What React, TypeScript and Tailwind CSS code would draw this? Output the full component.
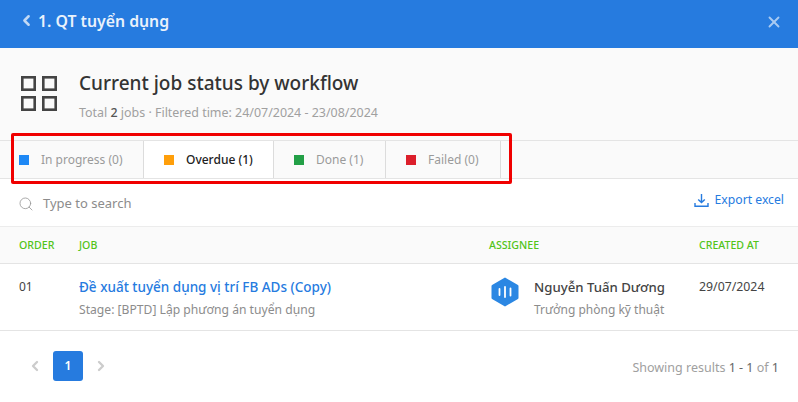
import { ChevronLeft, ChevronRight, Search, X } from "lucide-react";

const tabs = [
  { label: "In progress (0)", color: "bg-[#1e88f5]", width: "w-[144px]", pad: "pl-[19px]" },
  { label: "Overdue (1)", color: "bg-[#ff9f0a]", width: "w-[130px]", pad: "pl-[20px]", active: true },
  { label: "Done (1)", color: "bg-[#23a047]", width: "w-[112px]", pad: "pl-[20px]" },
  { label: "Failed (0)", color: "bg-[#dc1f2b]", width: "w-[115px]", pad: "pl-[20px]" },
];

export default function App() {
  return (
    <div className="relative h-[402px] w-[798px] overflow-hidden bg-white font-['Noto_Sans','Open_Sans',sans-serif] text-[#333]">
      <header className="flex h-[48px] items-center justify-between bg-[#267bdf] pb-[4px] pl-[18px] pr-[15px] text-white">
        <div className="flex items-center gap-[3px] opacity-90">
          <ChevronLeft className="mb-[3px] h-[17px] w-[17px] opacity-80" strokeWidth={3.5} />
          <span className="text-[15.8px] font-semibold">1. QT tuyển dụng</span>
        </div>
        <X className="h-[18px] w-[18px] opacity-60" strokeWidth={2.5} />
      </header>

      <section className="flex h-[93px] items-center gap-[22px] border-b border-[#e4e4e4] bg-[#fafafa] pb-[1px] pl-[21px]">
        <svg className="h-[35px] w-[36px]" viewBox="0 0 36 35" fill="none" stroke="#444" strokeWidth="2.6">
          <rect x="1.3" y="1.3" width="12.4" height="12.4" />
          <rect x="22.3" y="1.3" width="12.4" height="12.4" />
          <rect x="1.3" y="21.300" width="12.4" height="12.4" />
          <rect x="22.3" y="21.300" width="12.4" height="12.4" />
        </svg>
        <div className="pt-[3px]">
          <h1 className="text-[19px] leading-[26px] font-medium text-[#333]">Current job status by workflow</h1>
          <p className="mt-[8px] text-[12.45px] leading-[17px] text-[#a0a0a0]">
            Total <span className="font-medium text-[#555]">2</span> jobs · Filtered time: 24/07/2024 - 23/08/2024
          </p>
        </div>
      </section>

      <nav className="flex h-[38px] border-b border-[#e4e4e4] bg-[#fafafa]">
        {tabs.map((tab) => (
          <div
            key={tab.label}
            className={`flex items-center gap-[12px] border-r border-[#dcdcdc] pt-[1px] text-[12px] ${tab.width} ${tab.pad} ${
              tab.active ? "bg-white font-medium text-[#222]" : "text-[#9a9a9a]"
            }`}
          >
            <span className={`h-[10px] w-[10px] ${tab.color}`} />
            <span>{tab.label}</span>
          </div>
        ))}
      </nav>

      <div className="flex h-[48px] items-center justify-between border-b border-[#ececec] pl-[18px] pr-[14px] pt-[2px]">
        <div className="flex items-center gap-[9px] text-[13px] text-[#8c8c8c]">
          <Search className="h-[16px] w-[16px] text-[#999]" strokeWidth={1.25} />
          <span>Type to search</span>
        </div>
        <div className="mb-[6px] flex items-center gap-[6px] text-[12.2px] text-[#267bdf]">
          <svg className="h-[15px] w-[15px]" viewBox="0 0 15 15" fill="none" stroke="currentColor" strokeWidth="1.4">
            <path d="M7.5 1v8.5M4.2 6.4l3.3 3.2 3.300-3.200M1 10v3.300h13V10" />
          </svg>
          <span>Export excel</span>
        </div>
      </div>

      <div className="flex h-[37px] items-center border-b border-[#e4e4e4] bg-[#fafafa] pt-[2px] text-[10.6px] font-medium text-[#52c41a]">
        <div className="w-[79px] pl-[19px]">ORDER</div>
        <div className="w-[410px]">JOB</div>
        <div className="w-[210px]">ASSIGNEE</div>
        <div>CREATED AT</div>
      </div>

      <div className="flex h-[67px] border-b border-[#e4e4e4]">
        <div className="w-[79px] pl-[19px] pt-[14px] text-[12px] leading-[17px] text-[#444]">01</div>
        <div className="w-[410px] pt-[13px]">
          <div className="text-[13.5px] leading-[20px] font-medium text-[#267bdf]">Đề xuất tuyển dụng vị trí FB ADs (Copy)</div>
          <div className="mt-[4px] text-[12.15px] leading-[17px] text-[#8c8c8c]">Stage: [BPTD] Lập phương án tuyển dụng</div>
        </div>
        <div className="flex w-[210px] items-start gap-[15px] pl-[2px] pt-[13px]">
          <svg className="h-[30px] w-[28px]" viewBox="0 0 28 30">
            <path d="M14 0.500l12.500 7.200a1.500 1.500 0 0 1 1 1.300v12a1.500 1.500 0 0 1-1 1.300L14 29.500 1.500 22.300a1.500 1.500 0 0 1-1-1.300V9a1.500 1.500 0 0 1 1-1.300z" fill="#2b87e3" />
            <path d="M8.500 12v6M14 10v10M19.500 11.500v7" stroke="#fff" strokeWidth="1.800" strokeLinecap="round" />
          </svg>
          <div>
            <div className="text-[13.2px] leading-[20px] font-medium text-[#444]">Nguyễn Tuấn Dương</div>
            <div className="mt-[4px] text-[12px] leading-[17px] text-[#8c8c8c]">Trưởng phòng kỹ thuật</div>
          </div>
        </div>
        <div className="pt-[14px] text-[12.3px] leading-[17px] text-[#444]">29/07/2024</div>
      </div>

      <footer className="flex h-[71px] items-center justify-between pb-[1px] pl-[27px] pr-[19px]">
        <div className="flex items-center gap-[10px] text-[#ccc]">
          <ChevronLeft className="h-[16px] w-[16px]" strokeWidth={3.5} />
          <span className="flex h-[30px] w-[30px] items-center justify-center rounded-[3px] bg-[#267bdf] text-[12px] font-semibold text-white">1</span>
          <ChevronRight className="h-[16px] w-[16px]" strokeWidth={3.5} />
        </div>
        <div className="mt-[5px] text-[12.5px] text-[#a0a0a0]">
          Showing results <span className="text-[#666]">1 - 1</span> of <span className="text-[#666]">1</span>
        </div>
      </footer>

      <div className="pointer-events-none absolute top-[133px] left-[11px] h-[51px] w-[501px] rounded-[2px] border-[3px] border-[#f00000]" />
    </div>
  );
}
